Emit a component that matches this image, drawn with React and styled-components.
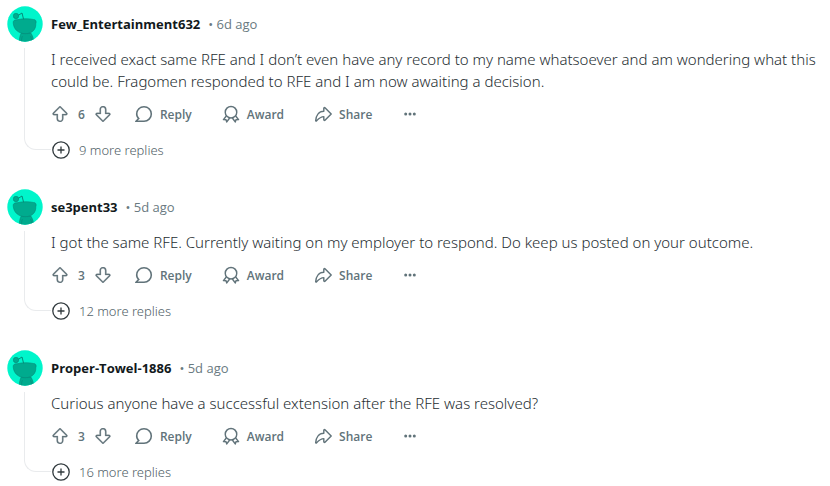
import styled, { createGlobalStyle } from 'styled-components';

const GlobalStyle = createGlobalStyle`
  body {
    margin: 0;
    background: #ffffff;
    font-family: "Noto Sans", "Open Sans", sans-serif;
    font-weight: 300;
    color: #262e32;
  }
`;

const Thread = styled.main`
  display: flex;
  flex-direction: column;
  gap: 27px;
  padding: 6px 0 0 7px;
`;

const CommentRow = styled.article`
  display: grid;
  grid-template-columns: 44px 1fr;
`;

const Gutter = styled.div`
  display: flex;
  flex-direction: column;
`;

const ThreadLine = styled.div`
  flex: 1;
  margin: 6px 0 12px 17px;
  border: solid #e9ebed;
  border-width: 0 0 1px 1px;
  border-bottom-left-radius: 12px;
`;

const Header = styled.header`
  display: flex;
  align-items: center;
  gap: 8px;
  height: 36px;
  font-family: "Open Sans", "Noto Sans", sans-serif;
  font-size: 13px;
`;

const Author = styled.a`
  color: #12191c;
  font-weight: 700;
  text-decoration: none;

  &:hover {
    text-decoration: underline;
  }
`;

const Time = styled.span`
  color: #6a7a81;
  font-weight: 400;
`;

const Body = styled.p`
  margin: 6px 0;
  font-size: 15px;
  line-height: 22px;
`;

const Actions = styled.div`
  display: flex;
  align-items: center;
  height: 32px;
  gap: 6px;
  color: #61737a;
  font-family: "Open Sans", "Noto Sans", sans-serif;
  font-size: 12px;
  font-weight: 600;
`;

const Votes = styled.div`
  display: flex;
  align-items: center;
  gap: 10px;
  margin-right: 6px;
  padding-left: 1px;
`;

const ActionButton = styled.button`
  display: flex;
  align-items: center;
  gap: 7px;
  padding: 0 12px;
  border: none;
  background: none;
  color: inherit;
  font: inherit;
  cursor: pointer;
`;

const IconButton = styled(ActionButton)`
  padding: 0;
`;

const MoreReplies = styled.button`
  display: flex;
  align-items: center;
  gap: 9px;
  height: 24px;
  margin-top: 8px;
  padding: 0 0 0 1px;
  border: none;
  background: none;
  color: #526269;
  font: inherit;
  font-size: 13px;
  cursor: pointer;
`;

const Icon = styled.svg`
  display: block;
  flex: none;
  width: ${(p) => p.$size || 18}px;
  height: ${(p) => p.$size || 18}px;
`;

const ARROW =
  'M10 19c-.072 0-.145 0-.218-.006A4.1 4.1 0 0 1 6 14.816V11H2.862a1.751 1.751 0 0 1-1.234-2.993L9.41.28a.836.836 0 0 1 1.18 0l7.782 7.727A1.751 1.751 0 0 1 17.139 11H14v3.882a4.134 4.134 0 0 1-.854 2.592A3.99 3.99 0 0 1 10 19Zm0-17.193L2.685 9.071a.251.251 0 0 0 .177.429H7.5v5.316A2.63 2.63 0 0 0 9.864 17.5a2.441 2.441 0 0 0 1.856-.682A2.478 2.478 0 0 0 12.5 15V9.5h4.639a.25.25 0 0 0 .176-.429L10 1.807Z';

function VoteIcon({ down }) {
  return (
    <Icon $size={16} viewBox="0 0 19 19" fill="currentColor" stroke="currentColor" strokeWidth="0.3" aria-hidden="true">
      <path d={ARROW} transform={down ? 'rotate(180 9.75 9.5)' : 'translate(-0.5 0)'} />
    </Icon>
  );
}

function ReplyIcon() {
  return (
    <Icon viewBox="0 0 20 20" fill="currentColor" aria-hidden="true">
      <path d="M10 1a9 9 0 00-9 9c0 1.947.79 3.58 1.935 4.957L.231 17.661A.784.784 0 00.785 19H10a9 9 0 009-9 9 9 0 00-9-9zm0 16.2H6.162c-.994.004-1.907.053-3.045.144l-.076-.188a36.981 36.981 0 002.328-2.087l-1.05-1.263C3.297 12.576 2.8 11.331 2.8 10c0-3.97 3.23-7.2 7.2-7.2s7.2 3.23 7.2 7.2-3.23 7.2-7.2 7.2z" />
    </Icon>
  );
}

function AwardIcon() {
  return (
    <Icon viewBox="0 0 20 20" fill="none" stroke="currentColor" strokeWidth="1.6" strokeLinejoin="round" aria-hidden="true">
      <circle cx="10" cy="8" r="6.4" />
      <path d="M4.8 12.2 1.6 16.2l2.9.1.8 2.5 3.2-4.4M15.2 12.2l3.2 4-2.9.1-.8 2.5-3.2-4.4" />
    </Icon>
  );
}

function ShareIcon() {
  return (
    <Icon viewBox="0 0 20 20" fill="none" stroke="currentColor" strokeWidth="1.6" strokeLinejoin="round" aria-hidden="true">
      <path d="M10.9 3.6c0-.7.8-1 1.3-.5l6.9 6.9-6.9 6.9c-.5.5-1.3.2-1.3-.5v-3.5c-3.9 0-5.9 2.3-8.1 4.8-.4.4-1 .2-.9-.4.4-5.2 3.2-10.200 9-10.300z" />
    </Icon>
  );
}

function DotsIcon() {
  return (
    <Icon $size={16} viewBox="0 0 16 16" fill="currentColor" aria-hidden="true">
      <circle cx="3.7" cy="8" r="1.5" />
      <circle cx="8" cy="8" r="1.5" />
      <circle cx="12.3" cy="8" r="1.5" />
    </Icon>
  );
}

function PlusIcon() {
  return (
    <Icon viewBox="0 0 18 18" fill="none" stroke="#30393d" strokeWidth="1.3" aria-hidden="true">
      <circle cx="9" cy="9" r="8.2" fill="#ffffff" />
      <path d="M9 5.5v7M5.5 9h7" />
    </Icon>
  );
}

function Avatar() {
  return (
    <Icon $size={36} viewBox="0 0 36 36" role="img" aria-label="User avatar">
      <clipPath id="avatar-clip">
        <circle cx="18" cy="18" r="17.7" />
      </clipPath>
      <g clipPath="url(#avatar-clip)">
        <rect width="36" height="36" fill="#00f5cb" />
        <g fill="#00ab8e" stroke="#078a78" strokeWidth="0.6">
          <path d="M12.5 37c-.4-4 .2-7 1.8-10h9.5c2 3 3 6 2.5 10z" />
          <path d="M15.5 30c-1 2-1 4-.8 6M23.5 30c1 2 1 4 .8 6" fill="none" />
          <path d="M6.3 17.5c-.6-2.5 1-4 3.7-3.7 5.5-1.4 11.5-1.4 16.5-.3 2.3 0 3.3 1.8 2.3 4.2.3 6.3-4.3 10-10.5 10-6.3 0-11.5-4-12-10.200z" />
          <path d="M16.6 13.3 15 7l-4 2.5" fill="none" strokeWidth="1" />
          <circle cx="9" cy="10" r="2.7" />
        </g>
      </g>
    </Icon>
  );
}

const comments = [
  {
    author: 'Few_Entertainment632',
    time: '6d ago',
    text: 'I received exact same RFE and I don’t even have any record to my name whatsoever and am wondering what this could be. Fragomen responded to RFE and I am now awaiting a decision.',
    votes: 6,
    replies: 9,
  },
  {
    author: 'se3pent33',
    time: '5d ago',
    text: 'I got the same RFE. Currently waiting on my employer to respond. Do keep us posted on your outcome.',
    votes: 3,
    replies: 12,
  },
  {
    author: 'Proper-Towel-1886',
    time: '5d ago',
    text: 'Curious anyone have a successful extension after the RFE was resolved?',
    votes: 3,
    replies: 16,
  },
];

function Comment({ author, time, text, votes, replies }) {
  return (
    <CommentRow>
      <Gutter>
        <Avatar />
        <ThreadLine />
      </Gutter>
      <div>
        <Header>
          <Author href="#">{author}</Author>
          <Time>• {time}</Time>
        </Header>
        <Body>{text}</Body>
        <Actions>
          <Votes>
            <IconButton aria-label="Upvote"><VoteIcon /></IconButton>
            <span>{votes}</span>
            <IconButton aria-label="Downvote"><VoteIcon down /></IconButton>
          </Votes>
          <ActionButton><ReplyIcon />Reply</ActionButton>
          <ActionButton><AwardIcon />Award</ActionButton>
          <ActionButton><ShareIcon />Share</ActionButton>
          <ActionButton aria-label="More options"><DotsIcon /></ActionButton>
        </Actions>
        <MoreReplies><PlusIcon />{replies} more replies</MoreReplies>
      </div>
    </CommentRow>
  );
}

export default function App() {
  return (
    <>
      <GlobalStyle />
      <Thread>
        {comments.map((comment) => (
          <Comment key={comment.author} {...comment} />
        ))}
      </Thread>
    </>
  );
}
